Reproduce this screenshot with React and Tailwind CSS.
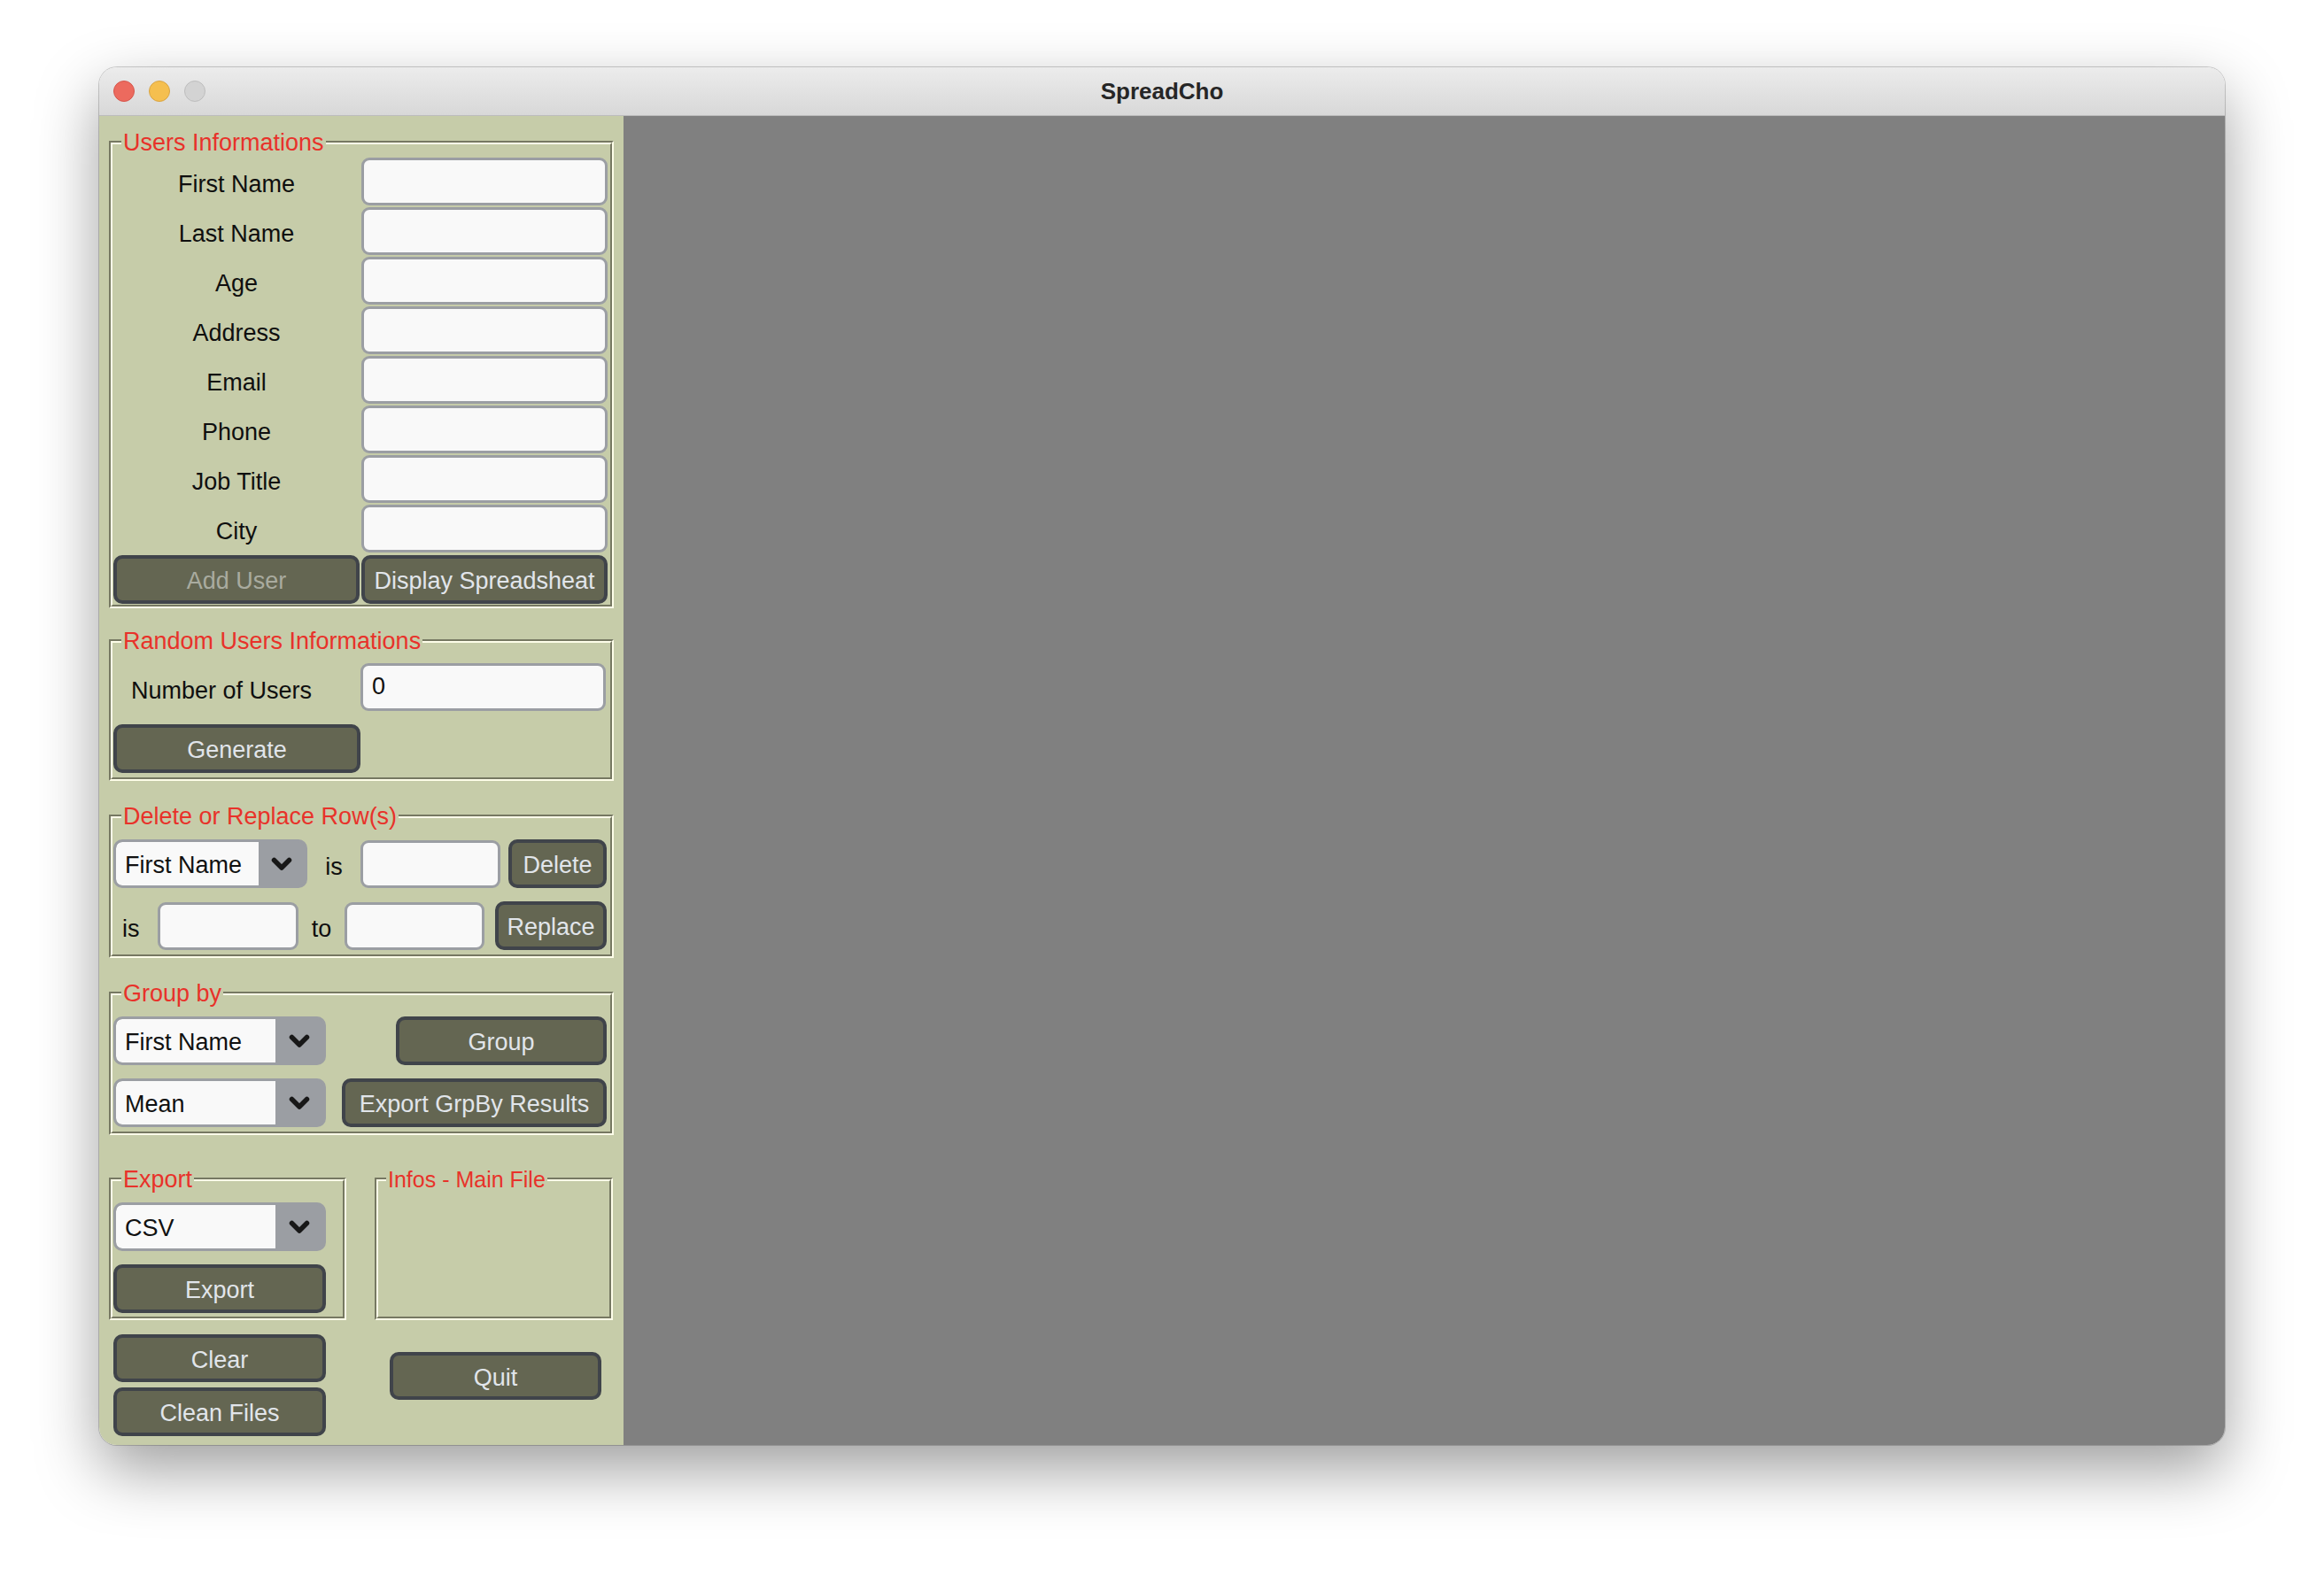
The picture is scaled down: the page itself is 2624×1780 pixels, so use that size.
import React from "react";

const fieldNames = ["First Name", "Last Name", "Age", "Address", "Email", "Phone", "Job Title", "City"];

// groove-style frame with a red title sitting on the top edge
function Frame({ title, titleLeft = "left-[12px]", titleSize = "text-[27px]", className = "", children }) {
  return (
    <div className={`relative border-2 border-t-[#767862] border-l-[#767862] border-b-[#fdfde9] border-r-[#fdfde9] ${className}`}>
      <div className="h-full border-2 border-t-[#fdfde9] border-l-[#fdfde9] border-b-[#767862] border-r-[#767862]">
        {children}
      </div>
      <span className={`absolute top-0 ${titleLeft} -translate-y-1/2 bg-[#c6cca9] px-[2px] ${titleSize} leading-none text-[#e8322a]`}>
        {title}
      </span>
    </div>
  );
}

function Entry({ value = "", className = "w-full" }) {
  return (
    <div className={`flex h-[54px] items-center rounded-[9px] border-[3px] border-[#9b9ea3] bg-[#f9f9f9] pl-[10px] pb-[2px] text-[27px] text-[#111] ${className}`}>
      {value}
    </div>
  );
}

function Btn({ children, disabled = false, className = "w-full h-[55px]" }) {
  return (
    <button
      className={`flex items-center justify-center rounded-[10px] border-[4px] border-[#40444a] bg-[#646652] pt-[4px] text-[27px] leading-none ${
        disabled ? "text-[#a9ab9f]" : "text-[#e1e5ea]"
      } ${className}`}
    >
      {children}
    </button>
  );
}

function Chevron() {
  return (
    <svg width="24" height="16" viewBox="0 0 24 16">
      <path d="M3.5 3.5 L12 12 L20.5 3.5" fill="none" stroke="#181818" strokeWidth="5.5" strokeLinecap="round" strokeLinejoin="round" />
    </svg>
  );
}

function Combo({ value, className = "w-[240px]", arrow = "w-[54px]" }) {
  return (
    <div className={`flex h-[55px] overflow-hidden rounded-[10px] border-[3px] border-[#9b9ea3] bg-[#9b9ea3] ${className}`}>
      <div className="flex flex-1 items-center rounded-l-[7px] bg-[#f9f9f9] pl-[10px] pt-[4px] text-[27px] text-[#111]">{value}</div>
      <div className={`flex items-center justify-center ${arrow}`}>
        <Chevron />
      </div>
    </div>
  );
}

export default function App() {
  return (
    <div className="h-[1780px] w-[2624px] bg-white pl-[112px] pt-[76px] font-['Liberation_Sans',Arial,sans-serif]">
      <div className="flex h-[1556px] w-[2400px] flex-col overflow-hidden rounded-[20px] shadow-[0_0_0_1px_rgba(0,0,0,0.18),0_28px_70px_rgba(0,0,0,0.38)]">
        {/* Title bar */}
        <div className="grid h-[55px] grid-cols-[1fr_auto_1fr] items-center border-b border-[#bcbcbc] bg-linear-to-b from-[#ececec] to-[#d8d8d8]">
          <div className="flex items-center gap-[16px] pl-[16px]">
            <span className="h-[24px] w-[24px] rounded-full border border-[#d5564c] bg-[#ec6a5e]" />
            <span className="h-[24px] w-[24px] rounded-full border border-[#d8a444] bg-[#f5bf4f]" />
            <span className="h-[24px] w-[24px] rounded-full border border-[#bdbdbd] bg-[#d3d3d3]" />
          </div>
          <div className="text-[26px] font-bold text-[#262626]">SpreadCho</div>
          <div />
        </div>

        <div className="flex flex-1">
          {/* Left panel */}
          <div className="w-[592px] bg-[#c6cca9] pl-[11px] pt-[28px] text-[27px] text-[#0f0f0f]">
            <Frame title="Users Informations" className="w-[570px]">
              <div className="pl-[1px] pr-[3px] pt-[15px] pb-[1px]">
                <div className="grid grid-cols-2 gap-[2px]">
                  {fieldNames.map((name) => (
                    <React.Fragment key={name}>
                      <div className="flex h-[54px] items-center justify-center pt-[6px]">{name}</div>
                      <Entry />
                    </React.Fragment>
                  ))}
                </div>
                <div className="mt-[3px] grid grid-cols-2 gap-[2px]">
                  <Btn disabled>Add User</Btn>
                  <Btn>Display Spreadsheat</Btn>
                </div>
              </div>
            </Frame>

            <Frame title="Random Users Informations" className="mt-[35px] w-[570px]">
              <div className="pl-[1px] pt-[23px] pb-[5px]">
                <div className="flex items-center">
                  <div className="w-[279px] pl-[20px] pt-[8px]">Number of Users</div>
                  <Entry value="0" className="w-[277px]" />
                </div>
                <Btn className="mt-[15px] h-[55px] w-[279px]">Generate</Btn>
              </div>
            </Frame>

            <Frame title="Delete or Replace Row(s)" className="mt-[38px] w-[570px]">
              <div className="pl-[1px] pt-[24px] pb-[5px]">
                <div className="flex items-center">
                  <Combo value="First Name" className="w-[219px]" arrow="w-[52px]" />
                  <div className="w-[60px] pt-[7px] text-center">is</div>
                  <Entry className="w-[158px]" />
                  <Btn className="ml-[9px] h-[55px] w-[111px]">Delete</Btn>
                </div>
                <div className="mt-[15px] flex items-center">
                  <div className="w-[50px] pl-[10px] pt-[7px]">is</div>
                  <Entry className="w-[159px]" />
                  <div className="w-[52px] pt-[7px] text-center">to</div>
                  <Entry className="w-[158px]" />
                  <Btn className="ml-[12px] h-[55px] w-[126px]">Replace</Btn>
                </div>
              </div>
            </Frame>

            <Frame title="Group by" className="mt-[38px] w-[570px]">
              <div className="pl-[1px] pr-[4px] pt-[24px] pb-[5px]">
                <div className="flex items-center justify-between">
                  <Combo value="First Name" />
                  <Btn className="h-[55px] w-[238px]">Group</Btn>
                </div>
                <div className="mt-[15px] flex items-center justify-between">
                  <Combo value="Mean" />
                  <Btn className="h-[55px] w-[299px]">Export GrpBy Results</Btn>
                </div>
              </div>
            </Frame>

            <div className="mt-[48px] flex">
              <Frame title="Export" className="w-[268px]">
                <div className="pl-[1px] pt-[24px] pb-[4px]">
                  <Combo value="CSV" />
                  <Btn className="mt-[15px] h-[55px] w-[240px]">Export</Btn>
                </div>
              </Frame>
              <Frame title="Infos - Main File" titleLeft="left-[11px]" titleSize="text-[25px]" className="ml-[32px] w-[269px]">
                <div />
              </Frame>
            </div>

            <div className="mt-[16px] flex">
              <div className="ml-[5px] flex flex-col gap-[6px]">
                <Btn className="h-[54px] w-[240px]">Clear</Btn>
                <Btn className="h-[55px] w-[240px]">Clean Files</Btn>
              </div>
              <div className="ml-[72px] pt-[20px]">
                <Btn className="h-[54px] w-[239px]">Quit</Btn>
              </div>
            </div>
          </div>

          {/* Spreadsheet area */}
          <div className="flex-1 bg-[#808080]" />
        </div>
      </div>
    </div>
  );
}
